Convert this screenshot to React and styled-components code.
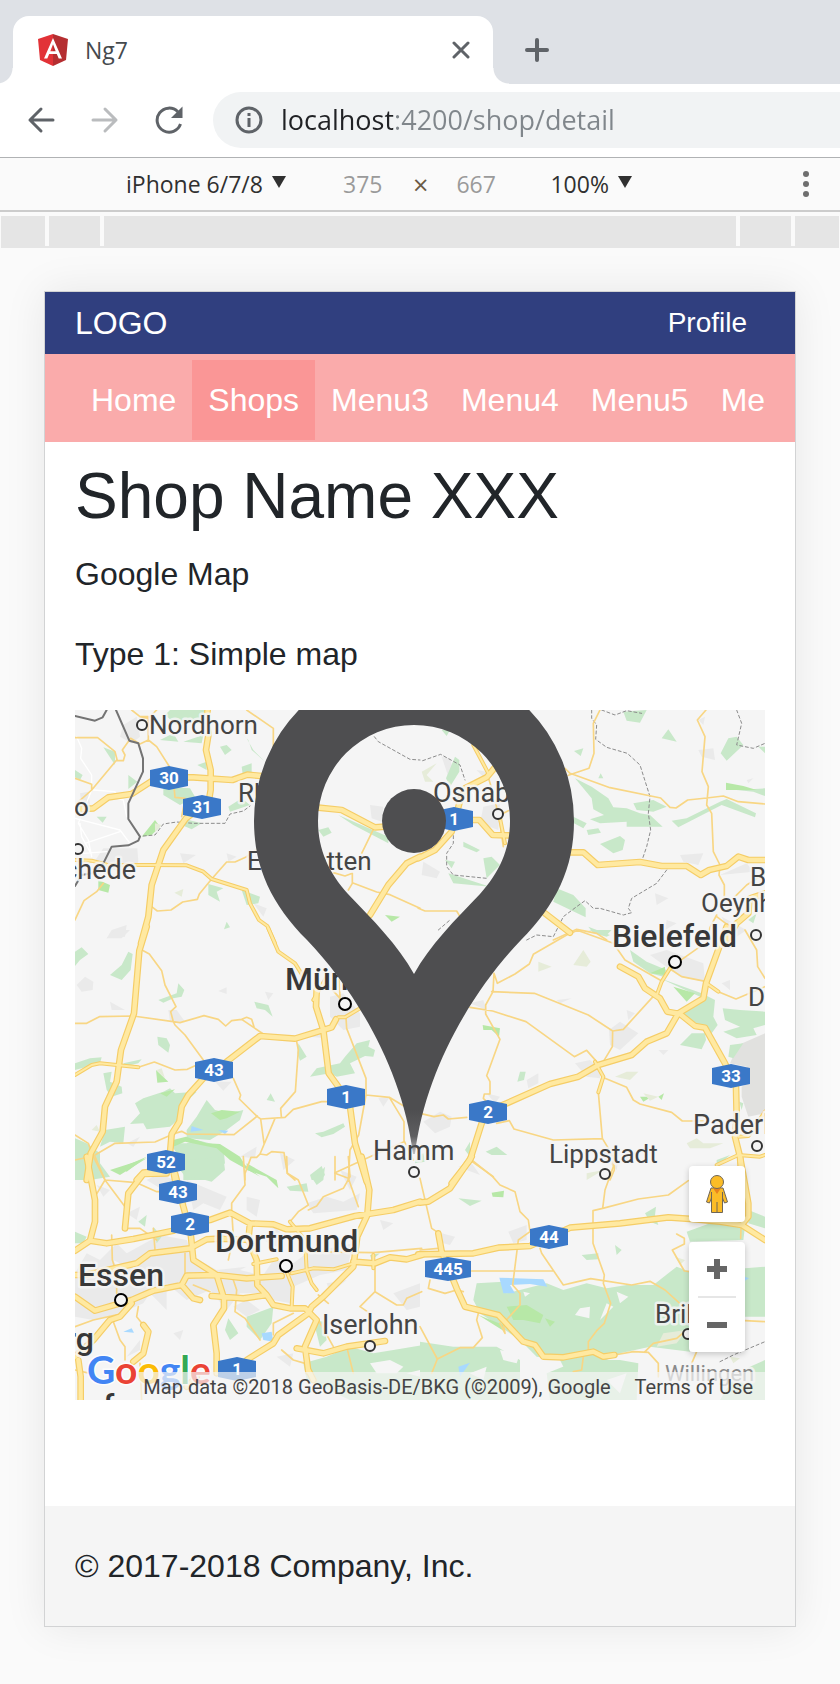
import React from 'react';
import styled, { createGlobalStyle } from 'styled-components';

const GlobalStyle = createGlobalStyle`
  *, *::before, *::after { box-sizing: border-box; }
  body {
    margin: 0;
    background: #fafafa;
    color: #212529;
    font-family: "Liberation Sans", Arial, sans-serif;
    font-size: 32px;
    line-height: 48px;
  }
  button { border: 0; padding: 0; background: none; cursor: pointer; }
  a { color: inherit; text-decoration: none; }
  svg { display: block; }
`;

const uiFont = '"Open Sans", "Noto Sans", sans-serif';

/* ---------- browser chrome ---------- */

const TabStrip = styled.header`
  display: flex;
  height: 84px;
  padding: 16px 0 0 13px;
  background: #dee1e6;
`;

const Tab = styled.div`
  position: relative;
  display: flex;
  align-items: center;
  flex: 0 1 480px;
  padding: 0 23px 0 24px;
  border-radius: 16px 16px 0 0;
  background: #fff;
  &::before, &::after {
    content: "";
    position: absolute;
    bottom: 0;
    width: 16px;
    height: 16px;
  }
  &::before { right: 100%; background: radial-gradient(circle at 0 0, #dee1e6 15px, #fff 16px); }
  &::after { left: 100%; background: radial-gradient(circle at 100% 0, #dee1e6 15px, #fff 16px); }
`;

const TabTitle = styled.span`
  flex: 1;
  padding-left: 16px;
  color: #45494d;
  font: 23px/32px ${uiFont};
`;

const IconButton = styled.button`
  display: grid;
  place-items: center;
  flex: none;
  color: #5f6368;
  ${({ $faded }) => $faded && 'color: #babcbe;'}
`;

const NewTabButton = styled(IconButton)`
  width: 56px;
  margin-left: 16px;
`;

const NavigationBar = styled.div`
  display: flex;
  align-items: center;
  gap: 36px;
  height: 73px;
  padding: 8px 0 9px 27px;
  background: #fff;
`;

const AddressBar = styled.label`
  display: flex;
  align-items: center;
  gap: 18px;
  flex: 1;
  min-width: 0;
  height: 56px;
  margin-left: -6px;
  padding-left: 22px;
  border-radius: 28px 0 0 28px;
  background: #f1f3f4;
  color: #5f6368;
`;

const AddressInput = styled.input`
  flex: 1;
  min-width: 0;
  padding: 0;
  border: 0;
  outline: 0;
  color: transparent;
  background: linear-gradient(90deg, #202124 112px, #80868b 112px);
  background-clip: text;
  -webkit-background-clip: text;
  font: 27px/40px ${uiFont};
`;

/* ---------- device toolbar ---------- */

const DeviceToolbar = styled.div`
  display: flex;
  align-items: center;
  height: 55px;
  padding: 0 29px 0 126px;
  border-top: 1px solid #b0b2b4;
  border-bottom: 2px solid #ccc;
  color: #303030;
  font: 23px/32px ${uiFont};
`;

const SelectBox = styled.label`
  display: flex;
  align-items: center;
  gap: 6px;
  width: ${({ $wide }) => ($wide ? '160px' : '82px')};
`;

const Select = styled.select`
  flex: 1;
  min-width: 0;
  padding: 0;
  border: 0;
  outline: 0;
  appearance: none;
  background: none;
  color: inherit;
  font: inherit;
`;

const Dimensions = styled.div`
  display: flex;
  align-items: center;
  gap: 28px;
  margin: 0 52px 0 57px;
  color: #6b5a45;
`;

const Times = styled.span`
  padding-top: 2px;
  font-size: 27px;
`;

const DimensionInput = styled.input`
  width: 42px;
  padding: 0;
  border: 0;
  outline: 0;
  background: none;
  color: #9a9a9a;
  font: inherit;
`;

const MoreButton = styled(IconButton)`
  margin-left: auto;
  color: #6e6e6e;
`;

const Ruler = styled.div`
  display: grid;
  grid-template-columns: 44px 51px 1fr 51px 44px;
  gap: 4px;
  height: 32px;
  margin: 4px 1px 43px;
  border-bottom: 2px solid #e5e5e5;
`;

const RulerStep = styled.span`
  background: #e5e5e5;
`;

/* ---------- emulated page ---------- */

const Device = styled.div`
  margin: 0 44px 56px;
  border: 1px solid #d2d3d4;
  background: #fff;
  box-shadow: 0 0 40px rgba(0, 0, 0, 0.08);
`;

const Brandbar = styled.div`
  display: flex;
  align-items: center;
  justify-content: space-between;
  height: 62px;
  padding: 0 48px 0 30px;
  background: #303f7f;
  color: #fff;
`;

const ProfileLink = styled.a`
  font-size: 28px;
`;

const MenuBar = styled.nav`
  padding: 6px 30px 2px;
  background: #faabab;
`;

const MenuScroller = styled.div`
  display: flex;
  overflow: hidden;
`;

const MenuLink = styled.a`
  flex: none;
  padding: 16px;
  color: #fff;
  background: ${({ $active }) => ($active ? '#fa9696' : 'transparent')};
`;

const Content = styled.main`
  padding: 16px 30px 106px;
`;

const Title = styled.h1`
  margin: 0 0 16px;
  font-size: 64px;
  font-weight: 400;
  line-height: 76px;
`;

const Paragraph = styled.p`
  margin: 0 0 32px;
`;

const PageFooter = styled.footer`
  padding: 36px 30px;
  background: #f5f5f5;
`;

/* ---------- map ---------- */

const MapFrame = styled.section`
  position: relative;
  overflow: hidden;
  font-family: Roboto, sans-serif;
  & > svg { width: 100%; height: auto; }
`;

const MapControls = styled.div`
  position: absolute;
  right: 20px;
  bottom: 48px;
  display: grid;
  gap: 20px;
  width: 56px;
`;

const ControlGroup = styled.div`
  display: grid;
  border-radius: 4px;
  background: #fff;
  box-shadow: 0 2px 6px rgba(0, 0, 0, 0.2);
`;

const ControlButton = styled.button`
  display: grid;
  place-items: center;
  height: ${({ $tall }) => ($tall ? '56px' : '54px')};
`;

const Divider = styled.span`
  height: 2px;
  margin: 0 9px;
  background: #e6e6e6;
`;

const Attribution = styled.div`
  position: absolute;
  right: 0;
  bottom: 0;
  display: flex;
  gap: 24px;
  padding: 2px 12px 0 7px;
  background: rgba(245, 245, 245, 0.7);
  color: #444;
  font-size: 20px;
  line-height: 26px;
  white-space: nowrap;
`;

/* The artwork is drawn in six sheets, three units to a pixel. */
const SHEETS = [
  {
    at: [-45, -60],
    urban: 'M190 105L230 80 240 140 215 160 180 140ZM130 475H232L235 515 200 570 180 545 100 520ZM360 490L408 495 370 520ZM500 490L530 500 505 515ZM60 310L85 305 90 345 65 350ZM580 640L620 655 610 680ZM930 345L970 350 965 395 935 385ZM155 720L200 705 195 740 140 745Z',
    green: 'M330 60H440L430 105 385 90 350 105 315 75ZM300 150L340 130 355 155ZM370 155L430 135 425 160ZM130 172L165 185 165 225ZM205 255L232 275 205 297ZM110 380L140 380 128 398ZM310 290L390 295 405 320 360 345 310 315ZM505 350L545 325 570 345 510 365ZM545 230L575 220 575 250 548 252ZM412 225L440 215V240ZM365 385L425 400 395 418 365 405ZM445 582L490 595 470 605 480 635 445 615ZM545 600L600 620 595 640 560 645ZM530 115L565 150 575 180 615 215 580 180 560 145ZM775 420L805 412 815 428 790 440ZM835 375L985 440 985 460 880 405ZM500 695L510 712 492 718ZM480 170L500 165 515 180 495 195ZM45 240L68 255 60 270 45 262Z',
    bright: 'M245 440L285 390 300 410 275 435ZM115 570L150 585 145 608 115 600ZM975 675L1020 680 995 695Z',
    beige: 'M343 608L370 597 365 620ZM285 400L305 405 285 425Z',
    street: 'M50 140L65 175 62 205 95 255 95 300 55 400 85 450 95 500M100 300L165 305 170 325 190 330 200 380M45 385L180 420 210 460M75 460L180 425M70 490L140 485M60 400L65 440 95 495',
    minor: 'M45 143H113L165 185 172 212 190 212 195 195 187 180 212 145 240 162 265 150V80H240L215 60M265 150L290 170 327 228M170 210L95 300 50 340M45 265L95 283 95 300M560 60L640 115 640 170M45 690L72 632 110 605 130 580M275 650L292 663 333 660 368 636 412 628 418 612 455 567 500 516 525 516 560 500 600 470M342 290L345 322 375 325M375 330L365 380M820 548L855 558 877 550 877 580 865 600M877 578L950 606 990 614 1080 655M940 418L905 490M240 80L265 85 290 60',
    medium: 'M45 510L95 512 140 524 380 526 430 545 455 567 560 600 570 640 597 690 622 708 645 760',
    major: 'M443 60L438 95 446 130 438 180 452 240 452 300 446 335L378 385 310 480 275 585 265 680 243 760M45 358L100 355 145 322 215 312 280 270 327 262 400 262 517 270 562 254 605 258M775 353L845 360 945 412 975 410M1080 500L1040 520 985 585 930 675',
    border: 'M45 78L105 92 128 82 140 60M168 60L208 152 235 160 249 205 249 245 205 340 205 387 240 440 235 452 205 466 155 470 125 530 95 550 65 555 45 588',
    dashed: 'M250 438L285 435 310 402 350 396 400 400 495 400 510 372 550 363 570 348M943 140L955 155 1050 208 1080 210',
  },
  {
    at: [1035, -60],
    urban: 'M780 495L850 490 835 525 790 515ZM835 180L880 175 885 210 845 200ZM705 610L745 625 710 645ZM190 350L240 340 235 420 180 400ZM10 515L60 545 50 565 5 555ZM740 690L770 700 735 720ZM905 680L980 720 935 750ZM170 240L200 245 190 262ZM65 200L90 205 105 260 90 275ZM835 90L855 80 850 105ZM980 270L1000 265 985 280ZM980 520L1000 545 900 555Z',
    green: 'M610 65L680 60 660 98 620 92ZM725 145L745 118 770 155ZM462 183L490 175 482 198ZM535 265L542 250 550 265ZM465 265L515 290 565 325 580 352 620 355 660 370 690 375 728 410 620 410 620 395 540 400 510 388 552 375 520 358 515 325ZM640 340L700 330 740 350 700 365 650 360ZM755 392L800 385 900 335 920 327 1008 370 1005 382 905 345 775 412ZM460 380L500 400 490 415 462 400ZM500 420L535 415 543 428 505 435ZM540 462L600 438 615 450 608 480 580 490ZM902 190L925 145 950 140 970 165 920 212ZM1015 170H1035V190ZM410 595L460 615 497 655V682L400 635ZM130 455L180 480 170 487 130 470ZM190 505L215 500 240 525 200 565ZM105 200L118 210 118 245 90 290 78 265ZM85 550L210 590 100 580ZM75 510L105 515 95 535ZM505 710L570 735 560 740 520 730ZM985 690L1010 670 1000 700ZM65 120H90L80 138ZM950 300L1035 295V318L1000 305Z',
    bright: 'M918 278L970 288 1010 300 918 300Z',
    beige: 'M5 245L50 220 20 255 40 275 15 275Z',
    street: 'M130 290L160 310 165 340',
    minor: 'M200 245L225 330 240 400 250 470M435 235L450 250 570 293 722 324 750 352 768 354 803 330 860 324 910 318 955 335 1035 342M445 256L507 235 522 190 520 100 540 60M858 60L832 90 855 140 846 245 865 290 860 345 875 370 880 485 900 525 897 555 913 585V620M890 675L870 712 860 760M400 750L470 718 530 730 560 750M-5 655L15 663H110L120 680M1035 550L980 585 945 620M240 375L265 362M890 680L930 710',
    medium: 'M160 165L205 250M235 360L255 460',
    major: 'M-5 505L45 480 95 425 118 340 135 295 200 262 225 232M150 390H178L218 435 265 436M450 487H490L533 525 660 516 725 528 800 528 842 555 868 540 920 528 955 500 985 510H1035M375 670L450 728M1035 610L990 625 985 670 950 700 920 750',
    dashed: 'M515 60V85L530 105 527 148 560 172 622 190 660 225 690 320 685 370 692 420 680 470 668 505M740 540L710 580 635 625 625 655 635 668 610 675 540 655 520 655 495 632 470 650 430 680 400 740 350 735 320 750M545 60L585 75 620 62 665 70M950 60L965 100 950 165 1000 175 1035 160M8 212L62 193 120 225 135 270M100 420L100 460 80 490 80 530 100 555 200 565M55 720L90 690',
  },
  {
    at: [-45, 660],
    urban: 'M50 165L75 140 100 155 98 180 65 185ZM150 215L195 240 155 240ZM475 183L500 172V192ZM615 185L640 190 625 210ZM325 240L350 240 375 275 330 275ZM810 200L850 190 900 250 900 290 850 300 810 260ZM465 455L515 455 490 482ZM955 505L990 500 970 530ZM140 25L165 0H210L185 25ZM660 670L705 690 670 720ZM45 710L75 720 60 750ZM540 680L590 650 585 685ZM750 320L790 310 800 325ZM200 640L240 620 220 650Z',
    green: 'M45 65L65 52 85 72 60 90 45 108ZM150 135L185 105 205 65 218 72 212 120 185 150ZM295 210L350 190 355 160 373 180 365 200 340 205 310 218ZM583 215L625 225 638 260 615 240 590 235ZM292 320L320 325 330 345 325 368 295 345ZM45 400L90 385 125 382 120 400 45 420ZM130 430L155 425 150 455 185 470 187 490 155 500 140 480ZM225 520L250 505 310 485 330 475 345 490 410 485 375 520 365 560 330 590 260 598 250 580 210 582 240 550ZM135 600L195 590 190 640 150 635 120 650ZM380 600L410 560 440 510 465 540 510 550 550 540 540 570 500 600 450 630 380 625ZM330 640L380 640 410 630 490 650 495 700 470 720 440 750H370V700ZM45 625L80 640 120 670 120 700 150 740 90 750H45ZM190 400L245 388 235 400 200 408ZM855 380L890 340 930 330 925 350 945 360 940 380 915 378 870 400 885 430 830 440 810 430 750 440 770 415 840 400ZM620 510L632 490 645 515ZM765 610L790 605 850 580 855 590 820 612 785 622ZM750 735L785 708 795 735 780 750H755ZM715 340L740 380 720 392 712 370ZM1070 680L1090 670 1095 695 1065 700Z',
    bright: 'M453 550L485 540 540 545 500 565 480 570ZM288 420L325 455 292 458ZM330 632L378 620 440 640 480 642 540 680 555 705 600 740 510 690 470 655 375 635 340 650ZM180 715L260 680 200 725ZM300 490L345 478 320 500Z',
    beige: 'M290 420L305 415 315 445ZM95 600L110 585 120 605Z',
    water: 'M395 588L430 600 392 605ZM475 600L505 602 495 612Z',
    minor: 'M45 280H80L118 260 220 258 360 278 432 257 475 268 497 288 515 272 545 268 560 262 575 268 582 290M250 62L268 72 305 122 315 165 348 230 332 245 340 275 345 285 375 315 430 390M545 268L610 312M235 412L283 396 345 420 382 418 410 405M520 445L542 495 538 507 592 560 602 567 675 562 700 538 785 515 800 515M710 335L715 360 706 485 662 535 664 560M592 558L522 614 380 612 365 604 345 610 285 636 165 640 100 678 45 690M45 615L85 640 100 680 135 750M602 567L612 640M645 565L600 672 620 675 635 665 672 668 682 730 705 750M600 672L590 682 573 682 555 730V750M858 262L860 295 918 445V495L896 615 870 660 865 750M918 495L988 502 1032 575V635L930 680 825 728V750M988 502L1035 530M1032 632L1060 690M840 200L835 110M800 160L840 205 850 240',
    medium: 'M45 435L95 405 120 400 235 412M625 -5L655 65 705 100 730 140M800 140L760 210M835 262L855 262 900 235',
    major: 'M260 -10L238 62 222 250 183 360 170 455 135 530 128 605 92 670 80 750M770 180L768 230 790 300 806 430 835 470 870 530 885 640 920 755M500 395L600 318 705 326 790 300 815 292 828 268M500 395L430 445 385 495 365 530 358 575 335 612 330 670 345 750M230 750L250 728 320 720',
  },
  {
    at: [1035, 660],
    urban: 'M690 75L740 60 850 100 855 155 780 140ZM567 300L600 275 655 310 600 360 570 345ZM465 400L510 390 540 420 540 445 500 440ZM320 450L355 430 355 460 325 475ZM10 575L60 545 95 560 90 590 45 610ZM410 210L455 205 420 220ZM715 360L745 360 730 375ZM540 670L600 660 590 720ZM200 490L240 500 225 520ZM150 220L190 210 200 240ZM905 160L930 150 930 180ZM620 240L645 250 625 270Z',
    industry: 'M930 400L955 345 1035 310V550L985 560 965 500V470L985 460 980 410Z',
    green: 'M630 60L680 95 740 120 730 140 690 130 640 95ZM720 145L845 190 885 210 880 260 893 285 875 310 830 280 780 250 850 205ZM780 345L815 310 855 310 858 330 845 358ZM908 235L960 240 1035 245V285L1000 295 1010 315 950 325 910 305 960 290 915 270ZM930 345L970 340 940 385 925 380ZM292 455L300 425 317 425 312 450ZM197 665L230 650 262 675 215 675ZM135 660L150 635 150 680ZM505 0H575L560 15ZM890 690L930 675 890 710ZM958 515L970 520 965 540Z',
    bright: 'M188 285L240 295 237 320 215 300 190 300ZM760 170L825 190 800 215ZM715 500L732 490 725 510ZM660 500L695 500 670 515ZM690 130L735 110 735 135Z',
    beige: 'M460 105L490 60 512 95 500 110ZM355 95L395 110 355 125ZM585 440L620 425 655 425 630 450ZM800 640L830 625 850 640 910 640 870 655 810 655ZM670 490L715 500 690 512Z',
    minor: 'M475 0L440 15 340 73 328 102 285 132 232 160 222 130 219 185 197 225 197 252 240 328 200 437 210 455V492H193L190 505 200 515M215 185L343 190 505 255 578 303 610 298 708 190M150 232L218 243 318 275 463 380 500 361 530 395M578 303L577 350 550 395M555 445L620 472 640 510 660 522 755 547 787 573H850M535 487L547 625 580 680 583 720 570 750M0 550L42 560 70 555 85 567 140 562M230 580L268 572 282 597 400 630 547 626M150 690L220 740M470 0L580 40 615 90 720 150M755 110L840 50M755 120L785 140 860 155M895 185L948 207 1035 170M975 0L1010 60 1013 110 1035 145',
    medium: 'M750 115L725 155 712 190M860 160L895 185M525 395L550 440 535 487M890 705L955 675 1020 680 1035 675M955 620L985 618 1035 545',
    major: 'M600 110L655 140 675 175 720 205 742 245 780 252 825 288 855 293 915 400 948 470 950 560 945 620 960 680 965 750M920 -10L858 160 850 205 775 250 740 310 680 335 635 375 535 405 475 440 390 462 260 520 200 545 185 580 150 690 95 760',
  },
  {
    at: [-45, 1350],
    urban: 'M45 340L80 280 120 300 170 250 200 280 300 225 380 240 400 290 470 330 560 320 600 360 640 300 700 310 740 280 880 250 860 330 780 345 700 380 690 430 640 420 600 400 540 400 500 450 450 390 380 420 320 370 320 450 270 400 250 430 180 460 100 480 45 470ZM740 130L800 110 850 125 900 100 890 150 760 160ZM380 60L500 110 480 150 430 130 400 150ZM840 30L890 50 870 90ZM300 40L340 60 300 85 260 60ZM560 110L600 120 590 170 560 150ZM520 440L560 420 600 450 560 470ZM1000 400L1080 370V440L1040 450ZM110 75L150 90 130 110ZM640 200L680 230 650 260 610 240ZM200 160L240 140 230 180ZM960 180L1000 190 970 210ZM800 370L860 360 810 400ZM200 590L240 540 240 570ZM650 590L700 580 690 620ZM340 520L370 510 360 540Z',
    green: 'M370 0L490 -10 495 30 455 65 400 50 380 55 360 30ZM45 215L80 230 70 250H45ZM560 470L640 440 635 490 600 540 560 500ZM505 475L535 520 510 540 495 510ZM760 60L795 20 790 60 770 75ZM235 185L260 165 255 200ZM800 590L870 560 940 580 1000 570 1090 555V720H870L740 660 730 610ZM760 480L790 485 800 540 780 560ZM680 80L740 70 745 95 690 92ZM280 200L305 230 290 250ZM930 285L960 280 935 300Z',
    bright: 'M560 10L650 60 655 85 620 50 560 30ZM150 30L260 -5 180 45Z',
    water: 'M605 520L635 515 640 545 610 540ZM680 500L705 490 665 510ZM190 515L215 505 222 518Z',
    hole: 'M930 610L990 600 1030 620 1010 640 950 640ZM1040 640L1080 630V650ZM540 330L600 300 580 340ZM160 300L200 320 180 340Z',
    minor: 'M550 -10L555 75 515 130V150L520 230 505 300M135 60L195 140M135 60L230 68 290 95H300M135 60L105 110M135 60L105 -10M680 -10L682 40 715 60 745 135 715 155 690 185M745 150L770 138 790 110 850 85 870 50 865 -10M825 -10V40L865 55 895 140M155 225L157 300 170 340 170 400M280 205L285 270M240 205L290 240M200 205H240M375 280V340M400 375L450 395M515 345L530 390 525 455 555 475 600 540M945 320V395L900 440 930 460M945 395L1010 435H1030L1040 415 1085 395M735 275L940 278 1085 265M160 485L180 540 195 560 195 600M640 490L700 460M640 490V525M775 405L805 430M775 480L820 560M665 570L700 600 735 610M860 560L880 640M45 500L100 480 190 460M235 440L230 470 250 495M45 630L90 640M240 610L245 720',
    medium: 'M690 185L735 240 740 330 755 370 770 390M680 335L698 380 695 440M695 340L760 325 820 328 880 310M580 312L650 298M940 285V325',
    major: 'M80 -10L105 120 105 185 90 242 45 272M90 242L140 250 220 237 340 212 375 195 450 180 510 158 570 190 640 193 680 208 750 205 885 168 1000 150 1080 125M905 -10L928 90 922 165 892 230 880 320 790 410 755 440 745 460 655 525 640 550 560 600M345 40L370 140 392 220 400 300 470 345 492 415V445L460 495 470 580V640M45 345H75L230 310 270 280 390 265 440 238 480 236 570 240M45 410L105 452 215 420 280 392 365 375 380 347 470 345 560 355 665 348M365 375L400 415 420 420M455 408L550 415 620 405 640 435 690 445 735 445 770 480 735 560 745 635M570 190L565 240 590 300 592 375 620 405M195 205L205 100 250 42 320 40M215 430L180 470 150 480 100 540 45 590M250 495L265 515 250 580 220 605M710 565L790 580 860 560 975 543M55 600L62 650V720M880 305L945 310 990 292 1040 298 1085 285M410 650L380 680M745 630L760 660',
  },
  {
    at: [1035, 1350],
    urban: 'M265 215L320 195 320 240 280 250ZM65 220L105 230 90 255 70 250ZM115 20L155 10 180 45 140 30ZM500 600L540 610 500 630Z',
    green: 'M170 370L250 365 260 400 380 370 430 390 500 370 560 385 620 375 700 375 770 320 810 335V575L690 560 600 580 540 610 450 660 420 600 350 590 300 540 180 460 160 420ZM975 325L1035 320V470H975ZM800 215L870 190 975 200 970 240 810 245ZM115 115L185 122 150 138ZM675 160L708 140 705 165 715 195 690 185ZM485 285L535 280 535 298 500 300ZM585 255L605 270 590 285ZM0 545L100 560 230 560 300 600 300 720H0ZM380 640L480 600 600 600 655 610 650 720H390ZM985 150L1035 170V205L985 190ZM990 620L1035 600V720H900L930 670Z',
    bright: 'M215 98L252 92 250 112 218 110ZM260 440L320 435 370 465 360 490 310 480 280 480ZM175 465L250 495 255 515ZM375 475L405 485 390 500Z',
    beige: 'M730 520L800 510 770 550 710 560ZM500 40L550 30 500 60ZM930 590L960 595 940 610ZM765 290L795 300 780 315Z',
    water: 'M238 353L370 358 382 380 330 372 270 375 285 400 250 400ZM115 620L150 608 120 650ZM975 350L987 355 975 362Z',
    hole: 'M480 445L510 440 508 475 465 465ZM590 395L625 410 600 430ZM560 430L580 440 540 480ZM240 570L300 580 290 610 250 600ZM150 640L200 620 190 660ZM560 660L620 640 600 700ZM310 395L330 400 315 410Z',
    minor: 'M155 0L218 50 240 75 285 95 300 155 325 180 330 215 295 240 278 375 300 400V435L250 490 255 520 240 490M360 265L365 280 430 375 460 368 512 356 550 362 635 375 690 364 735 390 790 440M155 333H398M0 55L35 205 50 215M0 270L55 265M580 -10L580 20 555 90 548 145 519 152V250L553 345 550 370 572 430 553 490 530 512 505 545V570M548 145L655 117 745 105 805 62M770 222L793 235V252L757 270 793 333 810 335M583 585L640 575 685 577 715 610V650M675 575L700 550 770 535 800 510M0 500L52 597 35 640M52 597L120 563H160L187 533 170 480 175 460M490 590L485 630 460 635M30 360L25 385 75 400 110 390 130 395M975 482L1035 485M830 575L815 610M963 205L962 235',
    major: 'M155 -10L90 85 25 125 0 128M-5 283L160 280 235 263 330 258 380 235 450 203 600 190 745 172 830 178 900 185 965 195 1035 240M55 220L65 275 110 385 135 440 235 465 310 545 345 555 370 590 430 592 520 575 550 590 583 585M960 -10L985 130V170L965 195',
    dashed: 'M900 605L940 585 1035 545',
  },
];

const LAYERS = [
  ['urban', { fill: '#eaeaea' }],
  ['industry', { fill: '#e1e1df' }],
  ['green', { fill: '#c8e8c9' }],
  ['bright', { fill: '#b7e8a7' }],
  ['beige', { fill: '#e6ecd9' }],
  ['hole', { fill: '#f5f5f5' }],
  ['water', { fill: '#a8d9ff' }],
  ['street', { stroke: '#fff', strokeWidth: 4 }],
  ['dashed', { stroke: '#8c8c8c', strokeWidth: 3, strokeDasharray: '9 8' }],
  ['minor', { stroke: '#f8d684', strokeWidth: 5 }],
  ['medium', { stroke: '#f5cd66', strokeWidth: 12 }],
  ['major', { stroke: '#f5cd66', strokeWidth: 20 }],
  ['medium', { stroke: '#ffe9a1', strokeWidth: 6 }],
  ['major', { stroke: '#ffe9a1', strokeWidth: 13 }],
  ['border', { stroke: '#747474', strokeWidth: 6 }],
];

const TOWNS = [
  { name: 'Nordhorn', x: 74, y: 24, dot: [67, 15] },
  { name: 'o', x: -1, y: 106 },
  { name: 'Enschede', x: 61, y: 169, end: true, size: 27, dot: [3, 139] },
  { name: 'Rheine', x: 163, y: 92 },
  { name: 'Emsdetten', x: 172, y: 160 },
  { name: 'Osnabrück', x: 358, y: 92, size: 27, dot: [423, 104] },
  { name: 'Bad', x: 675, y: 176 },
  { name: 'Oeynhausen', x: 626, y: 202, dot: [681, 225] },
  { name: 'Detmold', x: 673, y: 296 },
  { name: 'Hamm', x: 298, y: 450, size: 27, dot: [339, 462] },
  { name: 'Lippstadt', x: 474, y: 453, dot: [530, 464] },
  { name: 'Paderborn', x: 618, y: 424, size: 27, dot: [682, 436] },
  { name: 'Iserlohn', x: 247, y: 624, size: 27, dot: [295, 636] },
  { name: 'Brilon', x: 580, y: 613, dot: [613, 624] },
  { name: 'Willingen', x: 590, y: 671, size: 22, color: '#8a8a8a' },
];

const CITIES = [
  { name: 'Münster', x: 210, y: 280, dot: [270, 294] },
  { name: 'Bielefeld', x: 537, y: 237, dot: [600, 252] },
  { name: 'Dortmund', x: 140, y: 542, dot: [211, 556] },
  { name: 'Essen', x: 3, y: 576, dot: [46, 590] },
  { name: 'Duisburg', x: 19, y: 640, end: true },
  { name: 'f', x: 28, y: 707 },
];

const SHIELDS = [
  ['30', 94, 68], ['31', 127, 97], ['1', 379, 109], ['43', 139, 360],
  ['1', 271, 387], ['2', 413, 402], ['33', 656, 366], ['52', 91, 452],
  ['43', 103, 482], ['2', 115, 514], ['44', 474, 527], ['445', 373, 559],
  ['1', 162, 659],
];

const GOOGLE = [
  ['G', '#4285f4'], ['o', '#ea4335'], ['o', '#fbbc05'],
  ['g', '#4285f4'], ['l', '#34a853'], ['e', '#ea4335'],
];

const Place = ({ name, x, y, dot, end, color = '#444', size = 26, city }) => (
  <g>
    {dot && (
      <circle cx={dot[0]} cy={dot[1]} r={city ? 6 : 5} fill="#f5f5f5"
        stroke={city ? '#000' : '#333'} strokeWidth="2" />
    )}
    <text x={x} y={y} fontSize={city ? 32 : size} fontWeight={city ? 500 : 400}
      textAnchor={end ? 'end' : 'start'} fill={city ? '#383838' : color}
      stroke="#f5f5f5" strokeOpacity="0.85" strokeWidth="5" strokeLinejoin="round" paintOrder="stroke">
      {name}
    </text>
  </g>
);

const Shield = ({ label, x, y }) => {
  const w = label.length > 2 ? 23 : 19;
  return (
    <g transform={`translate(${x} ${y})`}>
      <path d={`M${-w} -8L0 -12 ${w} -8V8L0 12 ${-w} 8Z`} fill="#3a78c8" />
      <text y="6" fontSize="17" fontWeight="700" textAnchor="middle" fill="#fff">{label}</text>
    </g>
  );
};

const MapArtwork = () => (
  <svg viewBox="0 0 690 690" role="img" aria-label="Map around Hamm">
    <defs>
      <linearGradient id="pinFade" gradientUnits="userSpaceOnUse" x1="0" y1="400" x2="0" y2="444">
        <stop offset="0" stopColor="#4e4e50" />
        <stop offset="0.6" stopColor="#4e4e50" stopOpacity="0.9" />
        <stop offset="1" stopColor="#4e4e50" stopOpacity="0.3" />
      </linearGradient>
    </defs>
    <rect width="690" height="690" fill="#f5f5f5" />
    <g transform="scale(0.33333333)" fill="none" strokeLinejoin="round" strokeLinecap="round">
      {LAYERS.map(([layer, paint], i) => (
        <g key={i} {...paint}>
          {SHEETS.filter((sheet) => sheet[layer]).map((sheet) => (
            <path key={sheet.at.join()} transform={`translate(${sheet.at.join(' ')})`} d={sheet[layer]} />
          ))}
        </g>
      ))}
    </g>
    {TOWNS.map((town) => <Place key={town.name} {...town} />)}
    {CITIES.map((city) => <Place key={city.name} {...city} city />)}
    {SHIELDS.map(([label, x, y]) => <Shield key={`${x}-${y}`} label={label} x={x} y={y} />)}
    <path
      fill="url(#pinFade)" fillRule="evenodd"
      d="M179 111A160 160 0 0 1 499 111C499 158 481 195 446 230C398 280 350 360 340 444H338C328 360 280 280 232 230C197 195 179 158 179 111ZM243 111A96 96 0 0 1 435 111C435 140 424 163 405 184C380 210 355 235 339 264C323 235 298 210 273 184C254 163 243 140 243 111Z"
    />
    <circle cx="339" cy="111" r="32" fill="#4e4e50" />
    <text x="12" y="674" fontFamily="Lato, sans-serif" fontSize="39" fontWeight="700"
      stroke="#fff" strokeOpacity="0.8" strokeWidth="3" paintOrder="stroke">
      {GOOGLE.map(([letter, fill], i) => <tspan key={i} fill={fill}>{letter}</tspan>)}
    </text>
  </svg>
);

/* ---------- icons ---------- */

const Stroke = ({ size, width = 3, d, cap = 'round', children }) => (
  <svg width={size} height={size} viewBox={`0 0 ${size} ${size}`} fill="none"
    stroke="currentColor" strokeWidth={width} strokeLinecap={cap} strokeLinejoin="round">
    <path d={d} />
    {children}
  </svg>
);

const AngularIcon = () => (
  <svg width="32" height="32" viewBox="0 0 32 32">
    <path fill="#e23237" d="M16 0L1 5 3 26 16 32Z" />
    <path fill="#b52e31" d="M16 0L31 5 29 26 16 32Z" />
    <path fill="#fff" fillRule="evenodd" d="M16 4L7 24.500H10.300L12.200 20H19.800L21.700 24.500H25ZM16 10.200L18.700 17.200H13.300Z" />
  </svg>
);

const ReloadIcon = () => (
  <Stroke size={28} cap="butt" d="M25.500 18A12 12 0 1 1 22.800 5.800">
    <path d="M27.500 0.500V12H16Z" fill="currentColor" stroke="none" />
  </Stroke>
);

const InfoIcon = () => (
  <svg width="28" height="28" viewBox="0 0 28 28" fill="currentColor">
    <circle cx="14" cy="14" r="12" fill="none" stroke="currentColor" strokeWidth="3" />
    <rect x="12.500" y="7" width="3" height="3" />
    <rect x="12.500" y="12" width="3" height="9" />
  </svg>
);

const Triangle = () => (
  <svg width="14" height="16" viewBox="0 0 14 16" fill="#303030"><path d="M0 0H14L7 12Z" /></svg>
);

const DotsIcon = () => (
  <svg width="10" height="28" viewBox="0 0 10 28" fill="currentColor">
    <circle cx="5" cy="4" r="3" /><circle cx="5" cy="14" r="3" /><circle cx="5" cy="24" r="3" />
  </svg>
);

const PegmanIcon = () => (
  <svg width="24" height="40" viewBox="0 0 24 40" stroke="#6f6658" strokeWidth="1">
    <path fill="#fbbc27" d="M6 14H18L22.500 28 19.500 29 17.500 24V38.500H6.500V24L4.500 29 1.500 28Z" />
    <path d="M12 28V38M6.500 18V25M17.500 18V25" />
    <path fill="#e8831d" stroke="none" d="M8 14H16L12 20Z" />
    <circle cx="12" cy="8" r="6.500" fill="#fbbc27" />
  </svg>
);

const menu = ['Home', 'Shops', 'Menu3', 'Menu4', 'Menu5', 'Menu6'];

export default function App() {
  return (
    <>
      <GlobalStyle />
      <TabStrip>
        <Tab>
          <AngularIcon />
          <TabTitle>Ng7</TabTitle>
          <IconButton aria-label="Close tab"><Stroke size={18} d="M2 2L16 16M16 2L2 16" /></IconButton>
        </Tab>
        <NewTabButton aria-label="New tab"><Stroke size={26} width={4} d="M13 3V23M3 13H23" /></NewTabButton>
      </TabStrip>
      <NavigationBar>
        <IconButton aria-label="Back"><Stroke size={28} d="M14 3L3 14 14 25M3 14H26" /></IconButton>
        <IconButton aria-label="Forward" $faded><Stroke size={28} d="M14 3L25 14 14 25M25 14H2" /></IconButton>
        <IconButton aria-label="Reload"><ReloadIcon /></IconButton>
        <AddressBar>
          <InfoIcon />
          <AddressInput aria-label="Address" defaultValue="localhost:4200/shop/detail" />
        </AddressBar>
      </NavigationBar>

      <DeviceToolbar>
        <SelectBox $wide>
          <Select aria-label="Device"><option>iPhone 6/7/8</option></Select>
          <Triangle />
        </SelectBox>
        <Dimensions>
          <DimensionInput aria-label="Width" defaultValue="375" />
          <Times>×</Times>
          <DimensionInput aria-label="Height" defaultValue="667" />
        </Dimensions>
        <SelectBox>
          <Select aria-label="Zoom"><option>100%</option></Select>
          <Triangle />
        </SelectBox>
        <MoreButton aria-label="More options"><DotsIcon /></MoreButton>
      </DeviceToolbar>
      <Ruler>
        {[0, 1, 2, 3, 4].map((step) => <RulerStep key={step} />)}
      </Ruler>

      <Device>
        <Brandbar>
          <a href="#home">LOGO</a>
          <ProfileLink href="#profile">Profile</ProfileLink>
        </Brandbar>
        <MenuBar>
          <MenuScroller>
            {menu.map((item) => (
              <MenuLink key={item} href={`#${item}`} $active={item === 'Shops'}>{item}</MenuLink>
            ))}
          </MenuScroller>
        </MenuBar>
        <Content>
          <Title>Shop Name XXX</Title>
          <Paragraph>Google Map</Paragraph>
          <Paragraph>Type 1: Simple map</Paragraph>
          <MapFrame>
            <MapArtwork />
            <MapControls>
              <ControlGroup>
                <ControlButton $tall aria-label="Street View"><PegmanIcon /></ControlButton>
              </ControlGroup>
              <ControlGroup>
                <ControlButton aria-label="Zoom in">
                  <svg width="22" height="22" viewBox="0 0 22 22" fill="#666"><path d="M8 1H14V8H21V14H14V21H8V14H1V8H8Z" /></svg>
                </ControlButton>
                <Divider />
                <ControlButton aria-label="Zoom out">
                  <svg width="22" height="22" viewBox="0 0 22 22" fill="#666"><path d="M1 8H21V14H1Z" /></svg>
                </ControlButton>
              </ControlGroup>
            </MapControls>
            <Attribution>
              <span>Map data ©2018 GeoBasis-DE/BKG (©2009), Google</span>
              <a href="#terms">Terms of Use</a>
            </Attribution>
          </MapFrame>
        </Content>
        <PageFooter>© 2017-2018 Company, Inc.</PageFooter>
      </Device>
    </>
  );
}
